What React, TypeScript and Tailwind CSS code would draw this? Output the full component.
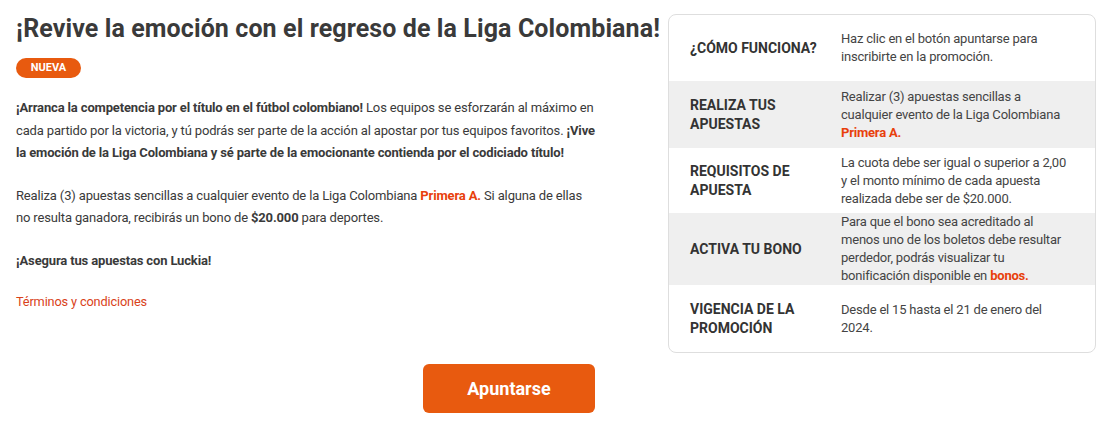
import { ReactNode } from 'react';

const rows: { label: string; value: ReactNode; gray?: boolean; h: string }[] = [
  { label: '¿CÓMO FUNCIONA?', value: <>Haz clic en el botón apuntarse para inscribirte en la promoción.</>, h: 'h-[66px]' },
  {
    label: 'REALIZA TUS APUESTAS',
    value: (
      <>
        Realizar (3) apuestas sencillas a cualquier evento de la Liga Colombiana{' '}
        <b className="text-[#e8400c]">Primera A.</b>
      </>
    ),
    gray: true,
    h: 'h-[67px]',
  },
  {
    label: 'REQUISITOS DE APUESTA',
    value: <>La cuota debe ser igual o superior a 2,00 y el monto mínimo de cada apuesta realizada debe ser de $20.000.</>,
    h: 'h-[65px]',
  },
  {
    label: 'ACTIVA TU BONO',
    value: (
      <>
        Para que el bono sea acreditado al menos uno de los boletos debe resultar perdedor, podrás visualizar tu
        bonificación disponible en <b className="text-[#e8400c]">bonos.</b>
      </>
    ),
    gray: true,
    h: 'h-[72px]',
  },
  { label: 'VIGENCIA DE LA PROMOCIÓN', value: <>Desde el 15 hasta el 21 de enero del 2024.</>, h: 'h-[67px]' },
];

export default function App() {
  return (
    <div className="w-[1114px] h-[422px] bg-white text-[#3a3a3a] font-['Roboto',sans-serif] overflow-hidden">
      <div className="flex pl-4 pt-[14px]">
        <section className="w-[652px] shrink-0">
          <h1 className="text-[25px] leading-[30px] font-bold whitespace-nowrap tracking-[0.1px]">
            ¡Revive la emoción con el regreso de la Liga Colombiana!
          </h1>
          <span className="mt-[14px] inline-flex h-[20px] w-[65px] items-center justify-center rounded-full bg-[#e85a0f] text-[11px] font-bold text-white">
            NUEVA
          </span>
          <div className="mt-[19px] w-[582px] text-[13px] leading-[22.5px] tracking-[-0.15px]">
            <p>
              <b>¡Arranca la competencia por el título en el fútbol colombiano!</b> Los equipos se esforzarán al máximo en
              cada partido por la victoria, y tú podrás ser parte de la acción al apostar por tus equipos favoritos.{' '}
              <b>¡Vive la emoción de la Liga Colombiana y sé parte de la emocionante contienda por el codiciado título!</b>
            </p>
            <p className="mt-[20px]">
              Realiza (3) apuestas sencillas a cualquier evento de la Liga Colombiana{' '}
              <b className="text-[#e8400c]">Primera A.</b> Si alguna de ellas no resulta ganadora, recibirás un bono de{' '}
              <b>$20.000</b> para deportes.
            </p>
            <p className="mt-[20px] font-bold">¡Asegura tus apuestas con Luckia!</p>
            <a href="#" className="mt-[19px] block text-[12.75px] text-[#d9421a]">
              Términos y condiciones
            </a>
          </div>
        </section>
        <aside className="w-[428px] shrink-0 overflow-hidden rounded-lg border border-[#dedede]">
          {rows.map((r) => (
            <div key={r.label} className={`flex items-center ${r.h} ${r.gray ? 'bg-[#efefef]' : ''}`}>
              <div className="w-[172px] shrink-0 pl-[21px] pr-3 text-[14px] leading-[19px] font-bold text-[#333]">
                {r.label}
              </div>
              <div className="w-[230px] text-[13px] leading-[18px] tracking-[-0.2px] text-[#444]">{r.value}</div>
            </div>
          ))}
        </aside>
      </div>
      <div className="mt-[11px] flex justify-center pr-[96px]">
        <button className="h-[49px] w-[172px] rounded-md bg-[#e85a0f] text-[18px] font-bold text-white">Apuntarse</button>
      </div>
    </div>
  );
}
